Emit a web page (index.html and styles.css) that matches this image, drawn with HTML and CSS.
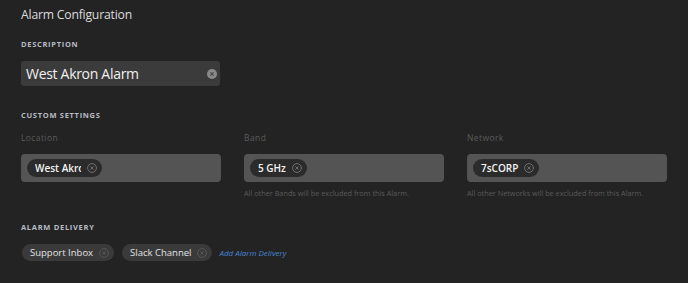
FILE: index.html
```html
<!DOCTYPE html>
<html lang="en">
<head>
  <meta charset="UTF-8">
  <title>Alarm Configuration</title>
  <link rel="stylesheet" href="styles.css">
</head>
<body>
  <div class="panel">
    <h1 class="title">Alarm Configuration</h1>

    <section class="section section-first">
      <h3 class="section-label">Description</h3>
      <div class="text-input">
        <span class="text-value">West Akron Alarm</span>
        <span class="clear-btn">
          <svg width="10" height="10" viewBox="0 0 10 10"><circle cx="5" cy="5" r="5" fill="#8a8a8a"/><path d="M3.4 3.4l3.2 3.2M6.6 3.4l-3.2 3.2" stroke="#4a4a4a" stroke-width="1.3"/></svg>
        </span>
      </div>
    </section>

    <section class="section">
      <h3 class="section-label">Custom Settings</h3>
      <div class="columns">
        <div class="field">
          <label class="field-label">Location</label>
          <div class="tag-box">
            <span class="chip chip-dark"><span class="chip-text clipped">West Akron</span><span class="chip-x"><svg width="10" height="10" viewBox="0 0 10 10"><circle cx="5" cy="5" r="4.4" fill="none" stroke="#777" stroke-width="0.9"/><path d="M3.4 3.4l3.2 3.2M6.6 3.4l-3.2 3.2" stroke="#777" stroke-width="0.9"/></svg></span></span>
          </div>
        </div>
        <div class="field">
          <label class="field-label">Band</label>
          <div class="tag-box">
            <span class="chip chip-dark"><span class="chip-text">5 GHz</span><span class="chip-x"><svg width="10" height="10" viewBox="0 0 10 10"><circle cx="5" cy="5" r="4.4" fill="none" stroke="#777" stroke-width="0.9"/><path d="M3.4 3.4l3.2 3.2M6.6 3.4l-3.2 3.2" stroke="#777" stroke-width="0.9"/></svg></span></span>
          </div>
          <p class="hint">All other Bands will be excluded from this Alarm.</p>
        </div>
        <div class="field">
          <label class="field-label">Network</label>
          <div class="tag-box">
            <span class="chip chip-dark"><span class="chip-text">7sCORP</span><span class="chip-x"><svg width="10" height="10" viewBox="0 0 10 10"><circle cx="5" cy="5" r="4.4" fill="none" stroke="#777" stroke-width="0.9"/><path d="M3.4 3.4l3.2 3.2M6.6 3.4l-3.2 3.2" stroke="#777" stroke-width="0.9"/></svg></span></span>
          </div>
          <p class="hint">All other Networks will be excluded from this Alarm.</p>
        </div>
      </div>
    </section>

    <section class="section">
      <h3 class="section-label">Alarm Delivery</h3>
      <div class="delivery">
        <span class="chip chip-soft"><span class="chip-text">Support Inbox</span><span class="chip-x"><svg width="10" height="10" viewBox="0 0 10 10"><circle cx="5" cy="5" r="4.4" fill="none" stroke="#5a5a5a" stroke-width="0.9"/><path d="M3.4 3.4l3.2 3.2M6.6 3.4l-3.2 3.2" stroke="#5a5a5a" stroke-width="0.9"/></svg></span></span>
        <span class="chip chip-soft"><span class="chip-text">Slack Channel</span><span class="chip-x"><svg width="10" height="10" viewBox="0 0 10 10"><circle cx="5" cy="5" r="4.4" fill="none" stroke="#5a5a5a" stroke-width="0.9"/><path d="M3.4 3.4l3.2 3.2M6.6 3.4l-3.2 3.2" stroke="#5a5a5a" stroke-width="0.9"/></svg></span></span>
        <a class="add-link" href="#">Add Alarm Delivery</a>
      </div>
    </section>
  </div>
</body>
</html>
```

FILE: styles.css
```css
:root {
  --bg: #232323;
  --box: #545454;
  --input: #3b3b3b;
  --chip-dark: #2b2b2b;
  --chip-soft: #3a3a3a;
  --text: #e9e9e9;
  --muted: #5a5a5a;
  --link: #4a86d8;
}
html, body {
  margin: 0;
  padding: 0;
  background: var(--bg);
}
body {
  font-family: 'Open Sans', 'Noto Sans', Arial, sans-serif;
  color: var(--text);
}
.panel {
  padding: 6px 21px 20px 21px;
}
.title {
  margin: 0;
  font-size: 12.2px;
  font-weight: 400;
  color: #dcdcdc;
  line-height: 18px;
  letter-spacing: -0.2px;
}
.section {
  margin-top: 24px;
}
.section-first {
  margin-top: 15px;
}
.section-label {
  margin: 0 0 12px 0;
  font-size: 7.5px;
  font-weight: 700;
  letter-spacing: 0.7px;
  text-transform: uppercase;
  color: #b8bcc4;
  line-height: 10px;
}
.text-input {
  width: 199px;
  height: 25px;
  box-sizing: border-box;
  background: var(--input);
  border-radius: 3px;
  display: flex;
  align-items: center;
  justify-content: space-between;
  padding: 0 3px 0 5px;
}
.text-value {
  font-size: 14px;
  color: #f0f0f0;
  letter-spacing: -0.3px;
}
.clear-btn {
  display: flex;
  width: 10px;
  justify-content: center;
}
.columns {
  display: grid;
  grid-template-columns: 200px 200px 200px;
  column-gap: 23px;
}
.field-label {
  display: block;
  font-size: 8.5px;
  color: var(--muted);
  letter-spacing: 0.4px;
  line-height: 12px;
  margin-bottom: 10px;
}
.tag-box {
  height: 28px;
  box-sizing: border-box;
  background: var(--box);
  border-radius: 4px;
  display: flex;
  align-items: center;
  padding: 0 6px;
}
.chip {
  display: inline-flex;
  align-items: center;
  height: 18px;
  border-radius: 9px;
  padding: 0 5px 0 8px;
  gap: 6px;
}
.chip-dark {
  background: var(--chip-dark);
}
.chip-soft {
  background: var(--chip-soft);
  height: 17px;
  padding: 0 5px 0 8px;
}
.chip-text {
  font-size: 10px;
  font-weight: 600;
  color: #f4f4f4;
  white-space: nowrap;
}
.chip-soft .chip-text {
  font-size: 9.5px;
  font-weight: 500;
  color: #e2e2e2;
}
.clipped {
  max-width: 46px;
  overflow: hidden;
}
.chip-x {
  display: flex;
}
.hint {
  margin: 6px 0 0 0;
  font-size: 7.3px;
  color: var(--muted);
  line-height: 10px;
}
.delivery {
  display: flex;
  align-items: center;
  gap: 8px;
  margin-left: 1px;
}
.add-link {
  font-size: 8px;
  font-style: italic;
  color: var(--link);
  text-decoration: none;
  margin-left: -1px;
}
```
